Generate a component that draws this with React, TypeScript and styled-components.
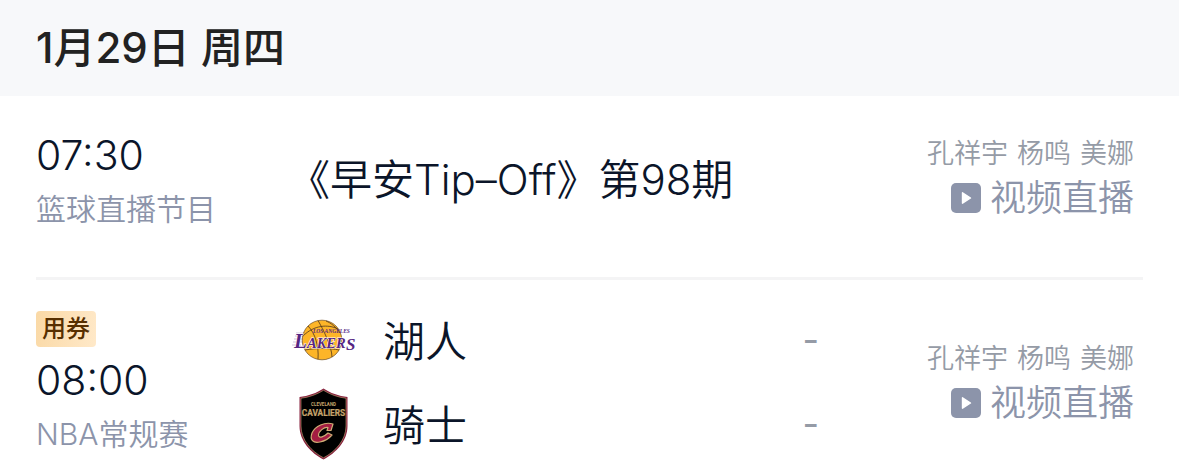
import React from 'react';
import styled, { createGlobalStyle } from 'styled-components';

const GlobalStyle = createGlobalStyle`
  * { box-sizing: border-box; }
  body {
    margin: 0;
    background: #fff;
    color: #0b1529;
    font-family: Inter, 'Noto Sans CJK SC', sans-serif;
    font-weight: 350;
  }
`;

const DateBar = styled.h1`
  margin: 0;
  padding: 0 36px;
  background: #f7f8fa;
  color: #222;
  font-size: 42px;
  font-weight: 500;
  line-height: 96px;
`;

const List = styled.ul`
  list-style: none;
  margin: 0;
  padding: 0 36px;
`;

const Row = styled.li`
  display: grid;
  grid-template-columns: 252px minmax(0, 1fr) 315px;
  align-items: center;
  padding: 18px 9px 36px 0;
  border-bottom: 3px solid #f4f4f5;

  &:last-child {
    padding-bottom: 0;
    border-bottom: 0;
  }
`;

const Schedule = styled.div`
  display: flex;
  flex-direction: column;
  align-items: flex-start;
  padding-top: 8px;
`;

const Coupon = styled.span`
  margin-bottom: 6px;
  padding: 0 6px;
  border-radius: 4px;
  background: linear-gradient(100deg, #fad9a6, #ffe9c9);
  color: #572f00;
  font-size: 24px;
  font-weight: 500;
  line-height: 36px;
`;

const Time = styled.time`
  font-size: 41px;
  line-height: 54px;
`;

const Category = styled.span`
  color: #8c94aa;
  font-size: 30px;
  line-height: 54px;
`;

const Title = styled.h2`
  margin: 0;
  padding-top: 4px;
  font-size: 42px;
  font-weight: 350;
  line-height: 123px;
  white-space: nowrap;
`;

const Team = styled.div`
  display: flex;
  align-items: center;
  gap: 23px;
  height: 84px;
`;

const TeamName = styled.span`
  padding-bottom: 4px;
  font-size: 42px;
`;

const Score = styled.span`
  margin-left: auto;
  color: #959ba6;
  font-size: 36px;
  font-weight: 400;
`;

const Broadcast = styled.div`
  display: flex;
  flex-direction: column;
  align-items: flex-end;
  padding-bottom: 3px;
`;

const Hosts = styled.div`
  display: flex;
  gap: 9px;
  color: #959ba6;
  font-size: 27px;
  line-height: 44px;
`;

const Watch = styled.button`
  display: flex;
  align-items: center;
  gap: 9px;
  padding: 0;
  border: 0;
  background: none;
  color: #8c94aa;
  font: inherit;
  font-size: 36px;
  line-height: 44px;
  cursor: pointer;
`;

const Logo = styled.svg`
  flex: none;
  width: 72px;
  height: 72px;
`;

function PlayIcon() {
  return (
    <svg width="30" height="30" viewBox="0 0 30 30" aria-hidden="true">
      <rect width="30" height="30" rx="5" fill="#8c94aa" />
      <path d="M11.5 9.8 19.5 15 11.5 20.2Z" fill="#fff" stroke="#fff" strokeWidth="1.4" strokeLinejoin="round" />
    </svg>
  );
}

function LakersLogo() {
  return (
    <Logo viewBox="0 0 72 72" role="img" aria-label="Lakers">
      <circle cx="34" cy="36" r="19.8" fill="#fdb528" stroke="#6b4a20" strokeWidth="0.7" />
      <g fill="none" stroke="#4d351c" strokeWidth="0.8">
        <path d="M30 16.5C35 25 44 43 44 53" />
        <path d="M20 22C27 29 31 42 30 55" />
        <path d="M15 32C26 21 40 20 50 25" />
        <path d="M38 17C43 19 48 23 52 29" />
        <path d="M17 46C28 44 42 44 51 46" />
      </g>
      <g stroke="#552583" strokeWidth="0.6">
        <path d="M8 29H17M7 32H16M6 35H15M5 38H14M4 41H13" opacity="0.45" />
      </g>
      <g fontFamily="Liberation Serif, serif" fontWeight="700" fontStyle="italic" fill="#552583">
        <text x="25" y="28.5" fontSize="5.5">LOS ANGELES</text>
        <g stroke="#fff" strokeWidth="1" paintOrder="stroke">
          <text x="6" y="43.5" fontSize="21">L</text>
          <text x="19" y="43.5" fontSize="14.5">AKER</text>
          <text x="58" y="45.5" fontSize="17">S</text>
        </g>
      </g>
    </Logo>
  );
}

function CavaliersLogo() {
  return (
    <Logo viewBox="0 0 72 72" role="img" aria-label="Cavaliers">
      <path d="M35.5.5C42 5 51 8 59.5 9V38C59.5 53 48 65 35.5 71.5C23 65 11.5 53 11.5 38V9C20 8 29 5 35.5.5Z" fill="#86203d" />
      <path d="M35.5 2.3C42 6.5 50 9.2 58 10.3V38C58 52 47.5 63.5 35.5 69.8C23.5 63.5 13 52 13 38V10.3C21 9.2 29 6.5 35.5 2.3Z" fill="#000" stroke="#c6a676" strokeWidth="0.6" />
      <g fontFamily="Roboto, sans-serif" fill="#c6a46c" textAnchor="middle" fontWeight="700">
        <text x="35.5" y="17.5" fontSize="4.5">CLEVELAND</text>
        <text x="35.5" y="27.5" fontSize="8.3" stroke="#c6a46c" strokeWidth="0.2">CAVALIERS</text>
      </g>
      <path d="M43 42.5 45 36C37 33.500 27 38 24 45C21.5 52 25 55.5 32 54C37 53 41 50.500 44 47L40 45C36 49 31 50.5 30.5 47.5C30.5 43 36 39 40 39.5L39 42.5Z" fill="#a31d42" stroke="#d0ad76" strokeWidth="1.2" strokeLinejoin="round" />
    </Logo>
  );
}

function BroadcastInfo() {
  return (
    <Broadcast>
      <Hosts>
        <span>孔祥宇</span>
        <span>杨鸣</span>
        <span>美娜</span>
      </Hosts>
      <Watch type="button">
        <PlayIcon />
        视频直播
      </Watch>
    </Broadcast>
  );
}

export default function App() {
  return (
    <main>
      <GlobalStyle />
      <DateBar>1月29日 周四</DateBar>
      <List>
        <Row>
          <Schedule>
            <Time>07:30</Time>
            <Category>篮球直播节目</Category>
          </Schedule>
          <Title>《早安Tip–Off》第98期</Title>
          <BroadcastInfo />
        </Row>
        <Row>
          <Schedule>
            <Coupon>用券</Coupon>
            <Time>08:00</Time>
            <Category>NBA常规赛</Category>
          </Schedule>
          <div>
            <Team>
              <LakersLogo />
              <TeamName>湖人</TeamName>
              <Score>-</Score>
            </Team>
            <Team>
              <CavaliersLogo />
              <TeamName>骑士</TeamName>
              <Score>-</Score>
            </Team>
          </div>
          <BroadcastInfo />
        </Row>
      </List>
    </main>
  );
}
